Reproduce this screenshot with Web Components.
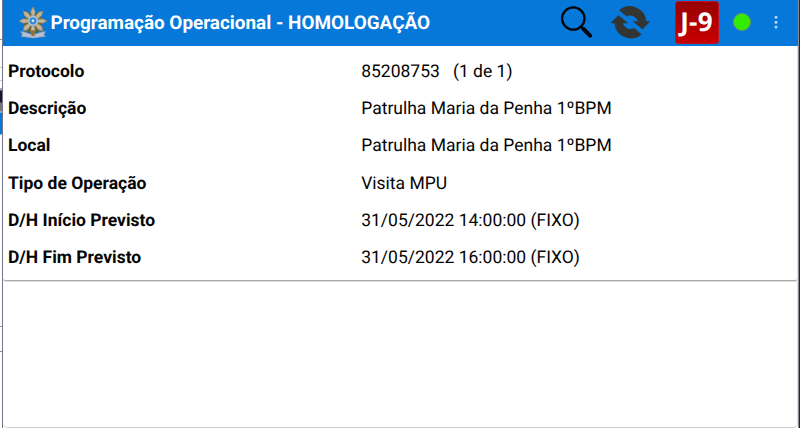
<!DOCTYPE html>
<html lang="pt-BR">
<head>
<meta charset="utf-8">
<title>Programação Operacional</title>
<style>
html,body{margin:0;height:100%;overflow:hidden;background:#fff}
body{font-family:Roboto,"Liberation Sans",sans-serif;color:#050505;text-rendering:geometricPrecision}
</style>
</head>
<body>
<operation-app>
  <app-header slot="header" heading="Programação Operacional - HOMOLOGAÇÃO"></app-header>
  <detail-row label="Protocolo">85208753&nbsp;&nbsp; (1 de 1)</detail-row>
  <detail-row label="Descrição">Patrulha Maria da Penha 1ºBPM</detail-row>
  <detail-row label="Local">Patrulha Maria da Penha 1ºBPM</detail-row>
  <detail-row label="Tipo de Operação">Visita MPU</detail-row>
  <detail-row label="D/H Início Previsto">31/05/2022 14:00:00 (FIXO)</detail-row>
  <detail-row label="D/H Fim Previsto">31/05/2022 16:00:00 (FIXO)</detail-row>
</operation-app>
<script>
const define = (name, html, setup) => customElements.define(name, class extends HTMLElement {
  constructor() {
    super();
    this.attachShadow({mode: 'open'}).innerHTML = html;
  }
  connectedCallback() { if (setup) setup(this, this.shadowRoot); }
});

const ray = angle => `<path d="M15 .8l2.200 4.400L16.500 11h-3l-.7-5.800z" transform="rotate(${angle} 15 15)"/>`;

define('coat-of-arms', `
<style>:host{display:block;width:30px;height:34px}svg{display:block}</style>
<svg width="30" height="34" viewBox="0 0 30 34">
  <path d="M9 8Q4 15 7 24Q15 31 23 24Q26 15 21 8Q15 5 9 8Z" fill="#58663c"/>
  <path d="M6 9l3-4 3 5-3 3zM24 9l-3-4-3 5 3 3zM5 21l3-3 3 5-3 3zM25 21l-3-3-3 5 3 3z" fill="#94733a"/>
  <g fill="#c0b49a" stroke="#94805a" stroke-width=".6">${[0, 45, 90, 135, 180, 225, 270, 315].map(ray).join('')}</g>
  <path d="M15 20v9" stroke="#c5bdad" stroke-width="2"/>
  <path d="M2.500 25.500l5 .8Q15 30 22.500 26.300l5-.8-1.500 3 1.500 2-5 .5Q15 33 8 31L3 30.500l1.500-2z" fill="#b7bfd0" stroke="#8793a8" stroke-width=".6"/>
  <path d="M12.500 25l2.500-1 2.500 1-1 5h-3z" fill="#897447"/>
  <circle cx="15" cy="14.800" r="5.200" fill="#c4ced6" stroke="#8d999c" stroke-width=".8"/>
  <circle cx="15" cy="14.800" r="3.600" fill="#348cd2"/>
  <circle cx="15" cy="14.800" r="1.300" fill="#d9efff"/>
</svg>`);

define('search-icon', `
<style>:host{display:block;width:34px;height:34px}svg{display:block}</style>
<svg width="34" height="34" viewBox="0 0 34 34" fill="none" stroke="#030608">
  <circle cx="13.300" cy="13.500" r="11.200" stroke-width="2.300"/>
  <path d="M21 21.500l3 3" stroke-width="2.500"/>
  <path d="M23.500 24l6.600 6.600" stroke-width="4" stroke-linecap="round"/>
</svg>`);

define('sync-icon', `
<style>:host{display:block;width:42px;height:36px}svg{display:block}</style>
<svg width="42" height="36" viewBox="0 0 42 36" fill="#333532">
  <path d="M9.200 5.200A16.500 16.500 0 0 1 36.300 16.300H40.400L32.500 24.300L22.500 16.300H28A7.900 7.900 0 0 0 16.600 11.500Z"/>
  <path d="M9.200 5.200A16.500 16.500 0 0 1 36.300 16.300H40.400L32.500 24.300L22.500 16.300H28A7.900 7.900 0 0 0 16.600 11.500Z" transform="rotate(180 20.400 17.300)"/>
</svg>`);

define('unit-badge', `
<style>:host{display:flex;box-sizing:border-box;width:44px;height:43px;border:1px solid #c01424;border-radius:3px;background:linear-gradient(#960000,#c80000);align-items:center;justify-content:center;color:#fff;font:700 26px/1 "Open Sans","Noto Sans",sans-serif}span{padding:0 1px 3px 0}</style>
<span><slot></slot></span>`);

define('status-dot', `
<style>:host{display:block;box-sizing:border-box;width:18px;height:18px;border:1px solid #6a9b59;border-radius:50%;background:#32eb00}</style>`);

define('more-icon', `
<style>:host{display:block}svg{display:block}</style>
<svg width="6" height="14" viewBox="0 0 6 14" fill="#b5d6f4"><circle cx="3" cy="2.300" r="1.500"/><circle cx="3" cy="7.200" r="1.500"/><circle cx="3" cy="12" r="1.500"/></svg>`);

define('app-header', `
<style>
:host{display:flex;height:46px;background:#0578da;color:#fff;box-sizing:border-box;padding-left:14.500px}
coat-of-arms{margin:6px 3px 0 0}
h1{margin:11px 0 0;font-size:18.920px;line-height:24px;font-weight:700;white-space:nowrap;flex:1}
search-icon{margin:5px 16px 0 0}
sync-icon{margin:5px 23px 0 0}
unit-badge{margin:1px 14px 0 0;letter-spacing:.3px}
status-dot{margin:13px 22px 0 0}
more-icon{margin:15px 19px 0 0}
</style>
<coat-of-arms></coat-of-arms><h1></h1><search-icon></search-icon><sync-icon></sync-icon><unit-badge>J-9</unit-badge><status-dot></status-dot><more-icon></more-icon>`,
(el, root) => { root.querySelector('h1').textContent = el.getAttribute('heading'); });

define('detail-row', `
<style>
:host{display:grid;grid-template-columns:353.200px 1fr;height:37.350px;align-items:center;white-space:nowrap;font-size:17.500px;line-height:22px}
b{font-weight:700}
</style>
<b></b><span><slot></slot></span>`,
(el, root) => { root.querySelector('b').textContent = el.getAttribute('label'); });

define('window-edge', `
<style>
:host{display:block;width:2px;height:428px;background:linear-gradient(#fff 39px,#8c8c8c 39px 40px,#fff 40px 67px,#ccc 67px 68px,#fff 68px 80px,#ccc 80px 81px,#fff 81px 88px,#aaa 88px 90px,#17172c 91px 102px,#777 103px 111px,#ddd 112px,#0579dc 113px 134px,#fff 135px 326px,#999 326px 327px,#fff 327px 351px,#888 351px 352px,#fff 352px)}
</style>`);

define('operation-app', `
<style>
:host{display:grid;grid-template-columns:2px 1fr 2px;height:428px}
main{display:flex;flex-direction:column;box-sizing:border-box;border-left:1px solid #73738a;min-width:0}
.details{box-sizing:border-box;height:235px;padding:6.900px 0 0 5px;border-bottom:1px solid #aaa;border-right:1px solid #ddd;border-radius:0 0 3px 3px;box-shadow:0 1px 0 #ddd}
.empty{flex:1;box-sizing:border-box;border-right:1px solid #ddd;border-bottom:1px solid #ccc;border-radius:0 0 5px 5px}
.right{background:linear-gradient(90deg,#888b94 50%,#22263a 50%)}
</style>
<window-edge></window-edge>
<main><slot name="header"></slot><section class="details"><slot></slot></section><section class="empty"></section></main>
<div class="right"></div>`);
</script>
</body>
</html>
